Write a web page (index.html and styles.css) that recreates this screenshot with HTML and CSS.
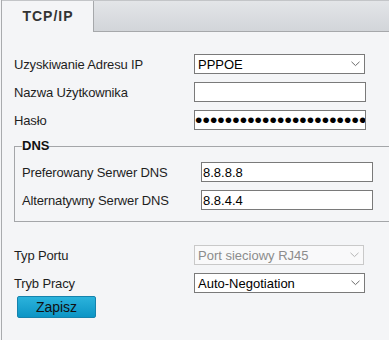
FILE: index.html
```html
<!DOCTYPE html>
<html lang="pl">
<head>
<meta charset="utf-8">
<title>TCP/IP</title>
<link rel="stylesheet" href="styles.css">
</head>
<body>
<div class="page">
  <div class="tabs">
    <div class="tab tab-active">TCP/IP</div>
    <div class="tab-rest"></div>
  </div>
  <div class="form">
    <div class="row">
      <span class="label">Uzyskiwanie Adresu IP</span>
      <div class="select w171">
        <span class="select-text">PPPOE</span>
        <svg class="chev" width="9" height="6" viewBox="0 0 9 6"><path d="M0.5 0.8 L4.5 4.6 L8.5 0.8" fill="none" stroke="#6b6b6b" stroke-width="1"/></svg>
      </div>
    </div>
    <div class="row">
      <span class="label">Nazwa Użytkownika</span>
      <input class="field w172" type="text" value="">
    </div>
    <div class="row">
      <span class="label">Hasło</span>
      <input class="field pwd w172" type="password" value="abcdefghijklmnopqrstuvwxyz">
    </div>

    <fieldset class="dns">
      <legend class="dns-legend">DNS</legend>
      <div class="row row-dns">
        <span class="label">Preferowany Serwer DNS</span>
        <input class="field w172" type="text" value="8.8.8.8">
      </div>
      <div class="row row-dns">
        <span class="label">Alternatywny Serwer DNS</span>
        <input class="field w172" type="text" value="8.8.4.4">
      </div>
    </fieldset>

    <div class="row row-port">
      <span class="label">Typ Portu</span>
      <div class="select select-disabled w170">
        <span class="select-text">Port sieciowy RJ45</span>
        <svg class="chev" width="9" height="6" viewBox="0 0 9 6"><path d="M0.5 0.8 L4.5 4.6 L8.5 0.8" fill="none" stroke="#b5b5b5" stroke-width="1"/></svg>
      </div>
    </div>
    <div class="row">
      <span class="label">Tryb Pracy</span>
      <div class="select w171">
        <span class="select-text">Auto-Negotiation</span>
        <svg class="chev" width="9" height="6" viewBox="0 0 9 6"><path d="M0.5 0.8 L4.5 4.6 L8.5 0.8" fill="none" stroke="#6b6b6b" stroke-width="1"/></svg>
      </div>
    </div>
    <button class="btn" type="button">Zapisz</button>
  </div>
</div>
</body>
</html>
```

FILE: styles.css
```css
html, body {
  margin: 0;
  padding: 0;
  background: #f4f5f7;
}

body {
  font-family: "Liberation Sans", Arial, sans-serif;
  color: #222;
  width: 389px;
  height: 340px;
  overflow: hidden;
}

.page {
  margin-left: 1px;
  border-left: 1px solid #a9abae;
  height: 340px;
  overflow: hidden;
  background: #f4f5f7;
}

.tabs {
  display: flex;
  height: 31px;
  border-top: 1px solid #c3c5c8;
}

.tab {
  width: 91px;
  height: 31px;
  box-sizing: border-box;
  font-weight: bold;
  font-size: 14px;
  letter-spacing: 1px;
  color: #333;
  text-align: center;
  line-height: 30px;
  padding-left: 1px;
}

.tab-active {
  background: #f4f5f7;
}

.tab-rest {
  flex: 1;
  height: 31px;
  box-sizing: border-box;
  border-left: 1px solid #a6a8ab;
  border-bottom: 1px solid #a6a8ab;
  background: linear-gradient(#e3e5e8, #d2d5d9);
}

.form {
  padding: 18px 0 0 12px;
}

.row {
  display: grid;
  grid-template-columns: 180px auto;
  align-items: center;
  height: 28px;
}

.row-dns {
  grid-template-columns: 179px auto;
}

.row-port {
  margin-top: 19px;
}

.label {
  font-size: 13px;
  letter-spacing: -0.15px;
  color: #1e1e1e;
  white-space: nowrap;
}

.field {
  box-sizing: border-box;
  height: 20px;
  margin: 0;
  padding: 0 1px;
  border: 1px solid #7a7a7a;
  border-radius: 0;
  background: #fff;
  font-family: "Liberation Sans", Arial, sans-serif;
  font-size: 13px;
  color: #000;
  outline: none;
}

.pwd {
  font-size: 21px;
  letter-spacing: 0.1px;
  padding: 0;
  line-height: 18px;
}

.w172 { width: 172px; }
.w171 { width: 171px; }
.w170 { width: 170px; }

.select {
  box-sizing: border-box;
  height: 20px;
  border: 1px solid #7a7a7a;
  background: #fff;
  display: flex;
  align-items: center;
  justify-content: space-between;
  padding: 0 4px 0 3px;
}

.select-text {
  font-size: 13px;
  color: #000;
  font-family: "Liberation Sans", Arial, sans-serif;
}

.select-disabled {
  border-color: #c9c9c9;
  background: #f9f9fa;
}

.select-disabled .select-text {
  color: #8c8c8c;
}

.chev {
  display: block;
}

.dns {
  margin: 4px -40px 0 0;
  padding: 4px 0 7px 7px;
  border: 1px solid #a4a6a9;
  min-width: 0;
}

.dns-legend {
  padding: 0;
  margin: 0;
  font-size: 13px;
  font-weight: bold;
  line-height: 16px;
  color: #111;
}

.btn {
  display: block;
  margin: -1px 0 0 3px;
  width: 79px;
  height: 22px;
  padding: 0;
  border: 1px solid #1583ad;
  border-radius: 2px;
  background: linear-gradient(#2bb3dc, #0c95c5);
  font-family: "Liberation Sans", Arial, sans-serif;
  font-size: 14px;
  color: #111;
  cursor: pointer;
}
```
